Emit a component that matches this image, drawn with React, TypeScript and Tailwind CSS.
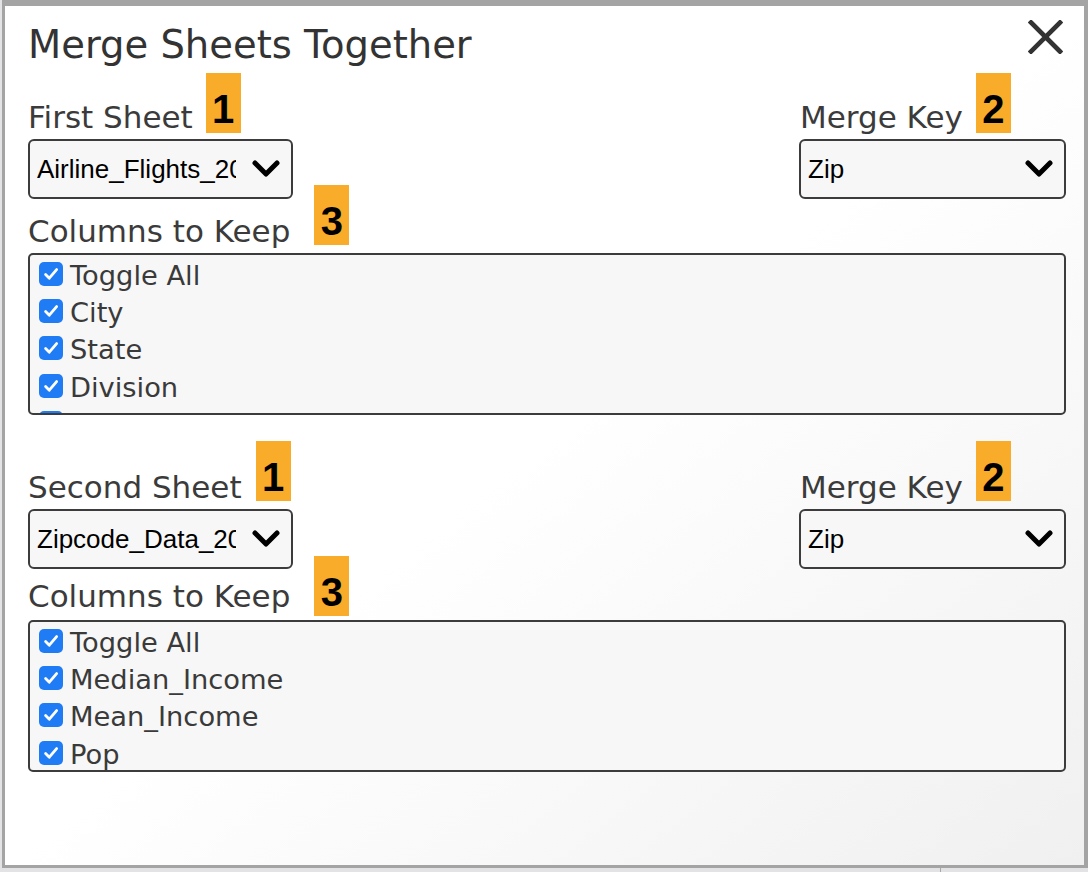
import React from "react";

const Check = () => (
  <span className="flex h-[24px] w-[24px] shrink-0 items-center justify-center rounded-[5px] bg-[#1f7cf4]">
    <svg width="18" height="18" viewBox="0 0 18 18" fill="none">
      <path d="M3.6 9.6 L7.3 13.2 L14.6 4.6" stroke="white" strokeWidth="2.8" strokeLinecap="round" strokeLinejoin="round" />
    </svg>
  </span>
);

const Chevron = () => (
  <svg width="28" height="18" viewBox="0 0 28 18" className="shrink-0">
    <path d="M3 3 L14 14 L25 3" fill="none" stroke="#000" strokeWidth="5" strokeLinecap="round" strokeLinejoin="round" />
  </svg>
);

function Select({ value, className }: { value: string; className: string }) {
  return (
    <div
      className={
        "flex h-[60px] items-center gap-[16px] rounded-[6px] border-2 border-[#3c3c3c] bg-[#f7f7f7] pl-[7px] pr-[11px] " +
        className
      }
    >
      <span className="min-w-0 flex-1 overflow-hidden whitespace-nowrap font-['Liberation_Sans',Arial,sans-serif] text-[26px] leading-[30px] text-black">
        {value}
      </span>
      <Chevron />
    </div>
  );
}

function Badge({ n, className }: { n: string; className: string }) {
  return (
    <span
      className={
        "absolute left-full flex h-[60px] w-[35px] justify-center bg-[#f9ab2a] pt-[16px] font-['Liberation_Sans',Arial,sans-serif] text-[40px] font-bold leading-[40px] text-black " +
        className
      }
    >
      {n}
    </span>
  );
}

function Label({
  text,
  n,
  badgeClass,
  className,
}: {
  text: string;
  n: string;
  badgeClass: string;
  className: string;
}) {
  return (
    <div className={"flex " + className}>
      <div className="relative whitespace-nowrap text-[31px] leading-[31px] text-[#3b3b3b]">
        {text}
        <Badge n={n} className={badgeClass} />
      </div>
    </div>
  );
}

function List({ items, className }: { items: string[]; className: string }) {
  return (
    <div className={"overflow-hidden rounded-[5px] border-2 border-[#3c3c3c] bg-[#f7f7f7] pl-[9px] " + className}>
      {items.map((t) => (
        <div key={t} className="flex h-[37.3px] shrink-0 items-center gap-[7px]">
          <Check />
          <span className="mt-[4px] whitespace-nowrap text-[27.3px] leading-[32px] text-[#3a3a3a]">{t}</span>
        </div>
      ))}
    </div>
  );
}

export default function App() {
  return (
    <div className="flex h-[872px] w-[1088px] flex-col bg-[#e3e3e6]">
      <div className="ml-[2px] h-[868px] w-[1086px] shrink-0 border-b-[3px] border-l-[3px] border-r-4 border-t-[6px] border-[#a4a4a4] bg-linear-to-br from-white from-50% to-[#f0f0f0] pl-[23px] pr-[18px] pt-[20px] font-['DejaVu_Sans',sans-serif]">
        <div className="flex items-start justify-between">
          <h1 className="text-[38.5px] leading-[38px] text-[#333333]">Merge Sheets Together</h1>
          <svg width="35" height="34" viewBox="0 0 35 34" className="-mt-[6px] mr-[3px]">
            <path d="M3 2.5 L32 31.5 M32 2.5 L3 31.5" stroke="#333333" strokeWidth="4.6" strokeLinecap="square" />
          </svg>
        </div>

        {/* Section 1 */}
        <div className="mt-[38px] flex justify-between">
          <div>
            <Label text="First Sheet" n="1" badgeClass="bottom-0 ml-[13px]" className="" />
            <Select value="Airline_Flights_2019" className="mt-[6px] w-[265px]" />
          </div>
          <div className="w-[267px]">
            <Label text="Merge Key" n="2" badgeClass="bottom-0 ml-[13px]" className="pl-[1px]" />
            <Select value="Zip" className="mt-[6px] w-[267px]" />
          </div>
        </div>
        <Label text="Columns to Keep" n="3" badgeClass="bottom-[2px] ml-[24px]" className="mt-[17px]" />
        <List
          items={["Toggle All", "City", "State", "Division", "Region"]}
          className="mt-[6px] h-[162px]"
        />

        {/* Section 2 */}
        <div className="mt-[57px] flex justify-between">
          <div>
            <Label text="Second Sheet" n="1" badgeClass="bottom-[2px] ml-[14px]" className="" />
            <Select value="Zipcode_Data_2019" className="mt-[6px] w-[265px]" />
          </div>
          <div className="w-[267px]">
            <Label text="Merge Key" n="2" badgeClass="bottom-[2px] ml-[13px]" className="pl-[1px]" />
            <Select value="Zip" className="mt-[6px] w-[267px]" />
          </div>
        </div>
        <Label text="Columns to Keep" n="3" badgeClass="-bottom-[4px] ml-[24px]" className="mt-[12px]" />
        <List
          items={["Toggle All", "Median_Income", "Mean_Income", "Pop"]}
          className="mt-[8px] h-[152px]"
        />
      </div>
      <div className="flex h-[4px]">
        <div className="ml-[940px] border-l border-[#a8a8a8]" />
      </div>
    </div>
  );
}
